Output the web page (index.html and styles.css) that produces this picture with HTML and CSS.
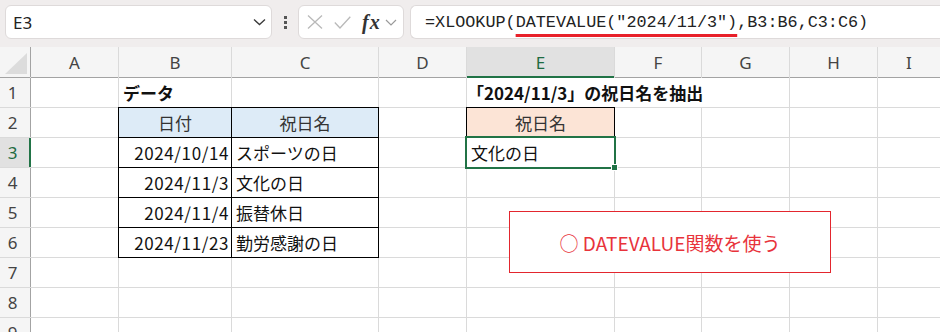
FILE: index.html
```html
<!DOCTYPE html>
<html lang="ja">
<head>
    <meta charset="UTF-8">
    <title>XLOOKUP DATEVALUE</title>
    <link rel="stylesheet" href="styles.css">
</head>
<body>
    <div class="toolbar">
        <div class="namebox">
            <span class="ref">E3</span>
            <svg class="chev" width="13" height="8" viewBox="0 0 13 8"><path d="M1 1.5 L6.5 6.5 L12 1.5" fill="none" stroke="#3a3a3a" stroke-width="1.3"/></svg>
        </div>
        <div class="grip"><i></i><i></i><i></i></div>
        <div class="fxbox">
            <svg width="16" height="14" viewBox="0 0 16 14"><path d="M1 0.5 L15 13.5 M15 0.5 L1 13.5" stroke="#b9b9b9" stroke-width="1.3" fill="none"/></svg>
            <svg width="17" height="13" viewBox="0 0 17 13"><path d="M0.8 6.5 L6 12 L16.3 0.8" stroke="#b9b9b9" stroke-width="1.3" fill="none"/></svg>
            <span class="fx">fx</span>
            <svg width="12" height="7" viewBox="0 0 12 7"><path d="M1 1 L6 6 L11 1" fill="none" stroke="#9a9a9a" stroke-width="1.2"/></svg>
        </div>
        <div class="formula">=XLOOKUP(<span class="mark">DATEVALUE("2024/11/3")</span>,B3:B6,C3:C6)</div>
    </div>

    <div class="sheet">
        <div class="hd corner"><span class="tri"></span></div>
        <div class="hd">A</div>
        <div class="hd">B</div>
        <div class="hd">C</div>
        <div class="hd">D</div>
        <div class="hd hd-sel">E</div>
        <div class="hd">F</div>
        <div class="hd">G</div>
        <div class="hd">H</div>
        <div class="hd">I</div>

        <div class="rh">1</div>
        <div class="c"></div>
        <div class="c bold">データ</div>
        <div class="c"></div>
        <div class="c"></div>
        <div class="c bold span3">「2024/11/3」の祝日名を抽出</div>
        <div class="c"></div>
        <div class="c"></div>

        <div class="rh">2</div>
        <div class="c"></div>
        <div class="c ctr blue box">日付</div>
        <div class="c ctr blue box">祝日名</div>
        <div class="c"></div>
        <div class="c ctr peach box">祝日名</div>
        <div class="c"></div>
        <div class="c"></div>
        <div class="c"></div>
        <div class="c"></div>

        <div class="rh rh-sel">3</div>
        <div class="c"></div>
        <div class="c num box">2024/10/14</div>
        <div class="c box">スポーツの日</div>
        <div class="c"></div>
        <div class="c sel">文化の日<span class="handle"></span></div>
        <div class="c"></div>
        <div class="c"></div>
        <div class="c"></div>
        <div class="c"></div>

        <div class="rh">4</div>
        <div class="c"></div>
        <div class="c num box">2024/11/3</div>
        <div class="c box">文化の日</div>
        <div class="c"></div>
        <div class="c"></div>
        <div class="c"></div>
        <div class="c"></div>
        <div class="c"></div>
        <div class="c"></div>

        <div class="rh">5</div>
        <div class="c"></div>
        <div class="c num box">2024/11/4</div>
        <div class="c box">振替休日</div>
        <div class="c"></div>
        <div class="c"></div>
        <div class="c"></div>
        <div class="c"></div>
        <div class="c"></div>
        <div class="c"></div>

        <div class="rh">6</div>
        <div class="c"></div>
        <div class="c num box">2024/11/23</div>
        <div class="c box">勤労感謝の日</div>
        <div class="c"></div>
        <div class="c"></div>
        <div class="c"></div>
        <div class="c"></div>
        <div class="c"></div>
        <div class="c"></div>

        <div class="rh">7</div>
        <div class="c"></div><div class="c"></div><div class="c"></div><div class="c"></div>
        <div class="c"></div><div class="c"></div><div class="c"></div><div class="c"></div><div class="c"></div>

        <div class="rh">8</div>
        <div class="c"></div><div class="c"></div><div class="c"></div><div class="c"></div>
        <div class="c"></div><div class="c"></div><div class="c"></div><div class="c"></div><div class="c"></div>

        <div class="rh">9</div>
        <div class="c"></div><div class="c"></div><div class="c"></div><div class="c"></div>
        <div class="c"></div><div class="c"></div><div class="c"></div><div class="c"></div><div class="c"></div>

        <div class="note">○ DATEVALUE関数を使う</div>
    </div>
</body>
</html>
```

FILE: styles.css
```css
body {
    margin: 0;
    width: 940px;
    height: 332px;
    overflow: hidden;
    background-color: #ffffff;
    font-family: "Noto Sans CJK JP", "Noto Sans", sans-serif;
    color: #111111;
}

/* barra de fórmulas */
.toolbar {
    height: 47px;
    box-sizing: border-box;
    padding: 5px 0 0 5px;
    background-color: #f0eded;
    display: flex;
    align-items: flex-start;
    overflow: hidden;
}
.namebox, .fxbox, .formula {
    flex-shrink: 0;
    height: 34px;
    box-sizing: border-box;
    background-color: #ffffff;
    border: 1px solid #dedada;
    border-radius: 6px;
    display: flex;
    align-items: center;
}
.namebox {
    width: 267px;
    padding: 0 5px 0 7px;
    justify-content: space-between;
}
.ref {
    font-family: "Noto Sans", sans-serif;
    font-size: 17px;
    color: #222222;
}
.grip {
    flex-shrink: 0;
    width: 26px;
    height: 34px;
    display: flex;
    flex-direction: column;
    align-items: center;
    justify-content: center;
    gap: 2px;
}
.grip i {
    width: 3px;
    height: 3px;
    background-color: #555555;
}
.fxbox {
    width: 106px;
    padding: 0 0 0 8px;
    gap: 11px;
}
.fxbox svg:last-child {
    margin-left: -7px;
}
.fx {
    font-family: "Liberation Serif", serif;
    font-style: italic;
    font-weight: bold;
    font-size: 20px;
    color: #333333;
    letter-spacing: 1px;
}
.formula {
    width: 550px;
    margin-left: 6px;
    padding-left: 14px;
    border-right: none;
    font-family: "Liberation Mono", monospace;
    font-size: 16.8px;
    color: #222222;
    white-space: nowrap;
}
.mark {
    text-decoration: underline;
    text-decoration-color: #e8202a;
    text-decoration-thickness: 3px;
    text-underline-offset: 7px;
}

/* planilha */
.sheet {
    position: relative;
    display: grid;
    grid-template-columns: 30px 87px 112px 146px 87px 147px 86px 87px 87px 62px;
    grid-template-rows: 30px repeat(9, 29px);
    gap: 1px;
    background-color: #dadada;
}
.hd, .rh {
    background-color: #f5f5f5;
    color: #444444;
    font-family: "Noto Sans", sans-serif;
    font-size: 17px;
    display: flex;
    align-items: center;
    justify-content: center;
}
.hd {
    box-shadow: 0 1px 0 #a3a3a3;
}
.rh {
    box-shadow: 1px 0 0 #a3a3a3;
    padding-right: 5px;
    font-size: 17px;
}
.hd-sel {
    background-color: #e1e1e1;
    color: #1e6b41;
    box-shadow: inset 0 -1px 0 #217346, 0 1px 0 #217346;
}
.rh-sel {
    background-color: #e1e1e1;
    color: #1e6b41;
    box-shadow: inset -1px 0 0 #217346, 1px 0 0 #217346;
}
.corner {
    position: relative;
    box-shadow: 0 1px 0 #a3a3a3, 1px 0 0 #a3a3a3;
}
.tri {
    position: absolute;
    left: 5px;
    top: 6px;
    width: 22px;
    height: 21px;
    background-color: #dcdcdc;
    clip-path: polygon(100% 0, 100% 100%, 0 100%);
}
.c {
    background-color: #ffffff;
    padding: 0 4px;
    font-size: 17px;
    line-height: 29px;
    white-space: nowrap;
    overflow: hidden;
}
.bold {
    font-weight: bold;
}
.span3 {
    grid-column: span 3;
    padding-left: 0;
    overflow: visible;
}
.ctr {
    text-align: center;
    color: #333333;
}
.num {
    text-align: right;
    padding-right: 2px;
    letter-spacing: 0.6px;
}
.blue {
    background-color: #ddebf7;
}
.peach {
    background-color: #fce4d6;
}
.box {
    box-shadow: 0 0 0 1px #000000;
}
.sel {
    position: relative;
    overflow: visible;
    z-index: 2;
    box-shadow: 0 0 0 2px #217346;
}
.handle {
    position: absolute;
    right: -4px;
    bottom: -4px;
    width: 5px;
    height: 5px;
    background-color: #217346;
    border: 1px solid #ffffff;
}

.note {
    position: absolute;
    left: 509px;
    top: 164px;
    width: 322px;
    height: 62px;
    box-sizing: border-box;
    border: 1.5px solid #e3262e;
    background-color: #ffffff;
    color: #e8333b;
    font-size: 19px;
    display: flex;
    align-items: center;
    justify-content: center;
    z-index: 3;
}
```
